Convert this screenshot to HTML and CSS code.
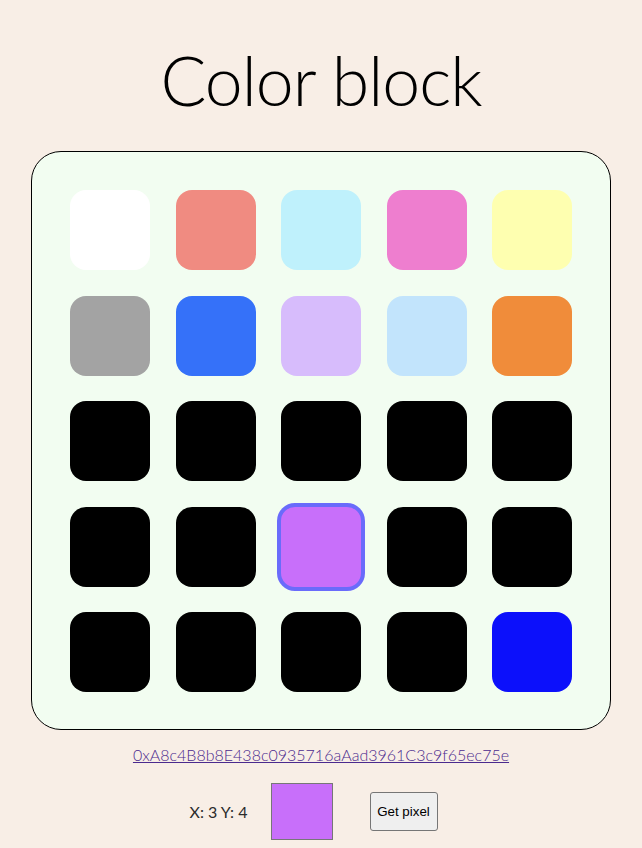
FILE: index.html
```html
<!DOCTYPE html>
<html>
<head>
<meta charset="utf-8">
<link rel="stylesheet" href="styles.css">
</head>
<body>
<h1 class="title">Color block</h1>
<div class="board">
  <div class="cell" style="background:#ffffff"></div>
  <div class="cell" style="background:#f08b81"></div>
  <div class="cell" style="background:#bff1fc"></div>
  <div class="cell" style="background:#ee7ecf"></div>
  <div class="cell" style="background:#feffb0"></div>
  <div class="cell" style="background:#a3a3a3"></div>
  <div class="cell" style="background:#3571f9"></div>
  <div class="cell" style="background:#d7bcfc"></div>
  <div class="cell" style="background:#c2e4fc"></div>
  <div class="cell" style="background:#f08c3a"></div>
  <div class="cell black"></div>
  <div class="cell black"></div>
  <div class="cell black"></div>
  <div class="cell black"></div>
  <div class="cell black"></div>
  <div class="cell black"></div>
  <div class="cell black"></div>
  <div class="cell selected" style="background:#c86ffa"></div>
  <div class="cell black"></div>
  <div class="cell black"></div>
  <div class="cell black"></div>
  <div class="cell black"></div>
  <div class="cell black"></div>
  <div class="cell black"></div>
  <div class="cell" style="background:#0c10fb"></div>
</div>
<p class="addr"><a href="#">0xA8c4B8b8E438c0935716aAad3961C3c9f65ec75e</a></p>
<div class="controls">
  <span class="coords">X: 3 Y: 4</span>
  <div class="preview"></div>
  <button class="getpixel">Get pixel</button>
</div>
</body>
</html>
```
FILE: styles.css
```css
html, body {
  margin: 0;
  padding: 0;
  background: #f8eee6;
}
body {
  font-family: "Liberation Sans", Arial, sans-serif;
}
.title {
  margin: 0;
  padding-top: 40px;
  height: 111px;
  box-sizing: border-box;
  text-align: center;
  font-family: Lato, "Noto Sans", sans-serif;
  font-weight: 300;
  font-size: 68px;
  line-height: 80px;
  color: #000;
  letter-spacing: -1px;
}
.board {
  margin: 40px auto 0;
  border: 1px solid #000;
  border-radius: 30px;
  background: #f2fdf1;
  padding: 38px;
  box-sizing: border-box;
  width: 580px;
  height: 579px;
  display: grid;
  grid-template-columns: repeat(5, 80px);
  grid-template-rows: repeat(5, 80px);
  column-gap: 25.5px;
  row-gap: 25.5px;
}
.cell {
  width: 80px;
  height: 80px;
  border-radius: 16px;
  box-sizing: border-box;
}
.black {
  background: #000;
}
.selected {
  box-sizing: content-box;
  border: 4px solid #6a6bfb;
  margin: -4px;
  border-radius: 18px;
}
.addr {
  margin: 16px 0 0;
  text-align: center;
  font-family: Lato, sans-serif;
  font-weight: 300;
  font-size: 16px;
  line-height: 18px;
}
.addr a {
  color: #4b2a8e;
}
.controls {
  display: flex;
  align-items: center;
  justify-content: center;
  margin-top: 19px;
  padding-right: 15px;
}
.coords {
  font-family: Lato, sans-serif;
  font-weight: 400;
  font-size: 16px;
  color: #2b2b2b;
  margin-right: 23px;
}
.preview {
  width: 60px;
  height: 55px;
  border: 1px solid #777;
  background: #c86ffa;
}
.getpixel {
  margin-left: 37px;
  width: 68px;
  height: 39px;
  padding: 0;
  font-family: "Liberation Sans", Arial, sans-serif;
  font-size: 13.33px;
  color: #000;
  background: #efefef;
  border: 1px solid #767676;
  border-radius: 3px;
}
```
